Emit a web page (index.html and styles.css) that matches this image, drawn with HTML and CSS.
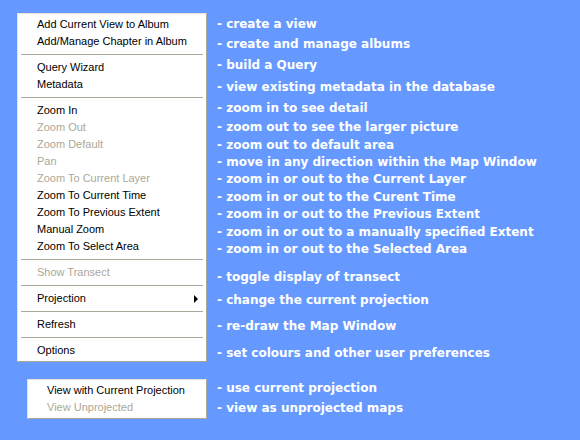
FILE: index.html
```html
<!DOCTYPE html>
<html>
<head>
<meta charset="utf-8">
<link rel="stylesheet" href="styles.css">
</head>
<body>
<div class="page">
  <div class="menus">
    <div class="menu main">
      <div class="item">Add Current View to Album</div>
      <div class="item">Add/Manage Chapter in Album</div>
      <div class="sep"></div>
      <div class="item">Query Wizard</div>
      <div class="item">Metadata</div>
      <div class="sep"></div>
      <div class="item">Zoom In</div>
      <div class="item off">Zoom Out</div>
      <div class="item off">Zoom Default</div>
      <div class="item off">Pan</div>
      <div class="item off">Zoom To Current Layer</div>
      <div class="item">Zoom To Current Time</div>
      <div class="item">Zoom To Previous Extent</div>
      <div class="item">Manual Zoom</div>
      <div class="item">Zoom To Select Area</div>
      <div class="sep"></div>
      <div class="item off">Show Transect</div>
      <div class="sep"></div>
      <div class="item sub">Projection<span class="arrow"></span></div>
      <div class="sep"></div>
      <div class="item">Refresh</div>
      <div class="sep"></div>
      <div class="item">Options</div>
    </div>
    <div class="menu proj">
      <div class="item">View with Current Projection</div>
      <div class="item off">View Unprojected</div>
    </div>
  </div>
  <div class="notes">
    <div class="note">- create a view</div>
    <div class="note">- create and manage albums</div>
    <div class="note">- build a Query</div>
    <div class="note">- view existing metadata in the database</div>
    <div class="note">- zoom in to see detail</div>
    <div class="note">- zoom out to see the larger picture</div>
    <div class="note">- zoom out to default area</div>
    <div class="note">- move in any direction within the Map Window</div>
    <div class="note">- zoom in or out to the Current Layer</div>
    <div class="note">- zoom in or out to the Curent Time</div>
    <div class="note">- zoom in or out to the Previous Extent</div>
    <div class="note">- zoom in or out to a manually specified Extent</div>
    <div class="note">- zoom in or out to the Selected Area</div>
    <div class="note">- toggle display of transect</div>
    <div class="note">- change the current projection</div>
    <div class="note">- re-draw the Map Window</div>
    <div class="note">- set colours and other user preferences</div>
    <div class="note">- use current projection</div>
    <div class="note">- view as unprojected maps</div>
  </div>
</div>
</body>
</html>
```

FILE: styles.css
```css
html, body {
  margin: 0;
  padding: 0;
  background: #6699ff;
}
.page {
  width: 580px;
  height: 440px;
  box-sizing: border-box;
  padding: 13px 0 0 17px;
  display: flex;
  gap: 10px;
  overflow: hidden;
}
.menus {
  width: 190px;
  flex: none;
  display: flex;
  flex-direction: column;
}
.menu {
  background: #ffffff;
  border: 1px solid #aca899;
  border-left-color: #e4e2da;
  border-top-color: #e4e2da;
  padding: 2px 0;
  font-family: "Liberation Sans", Arial, sans-serif;
  font-size: 11px;
  color: #000;
}
.proj {
  margin: 17px 0 0 10px;
}
.item {
  height: 17px;
  line-height: 17px;
  padding-left: 19px;
  white-space: nowrap;
  position: relative;
}
.item.off {
  color: #aca899;
}
.sep {
  height: 1px;
  margin: 4px 3px;
  background: #aca899;
}
.arrow {
  position: absolute;
  right: 8px;
  top: 5px;
  width: 0;
  height: 0;
  border-top: 4px solid transparent;
  border-bottom: 4px solid transparent;
  border-left: 4px solid #000;
}
.notes {
  display: flex;
  flex-direction: column;
  padding-top: 3px;
  font-family: "DejaVu Sans", Verdana, sans-serif;
  font-weight: bold;
  font-size: 12px;
  color: #ffffff;
  white-space: nowrap;
}
.note {
  height: 17px;
  line-height: 17px;
}
.note:nth-child(2) { margin-top: 3px; }
.note:nth-child(3) { margin-top: 4px; }
.note:nth-child(4) { margin-top: 5px; }
.note:nth-child(5) { margin-top: 4px; }
.note:nth-child(6) { margin-top: 2px; }
.note:nth-child(7) { margin-top: 1px; }
.note:nth-child(8) { margin-top: 0; }
.note:nth-child(9) { margin-top: 0; }
.note:nth-child(10) { margin-top: 1px; }
.note:nth-child(11) { margin-top: 0; }
.note:nth-child(12) { margin-top: 1px; }
.note:nth-child(13) { margin-top: 0; }
.note:nth-child(14) { margin-top: 11px; }
.note:nth-child(15) { margin-top: 6px; }
.note:nth-child(16) { margin-top: 9px; }
.note:nth-child(17) { margin-top: 10px; }
.note:nth-child(18) { margin-top: 18px; }
.note:nth-child(19) { margin-top: 3px; }
```
